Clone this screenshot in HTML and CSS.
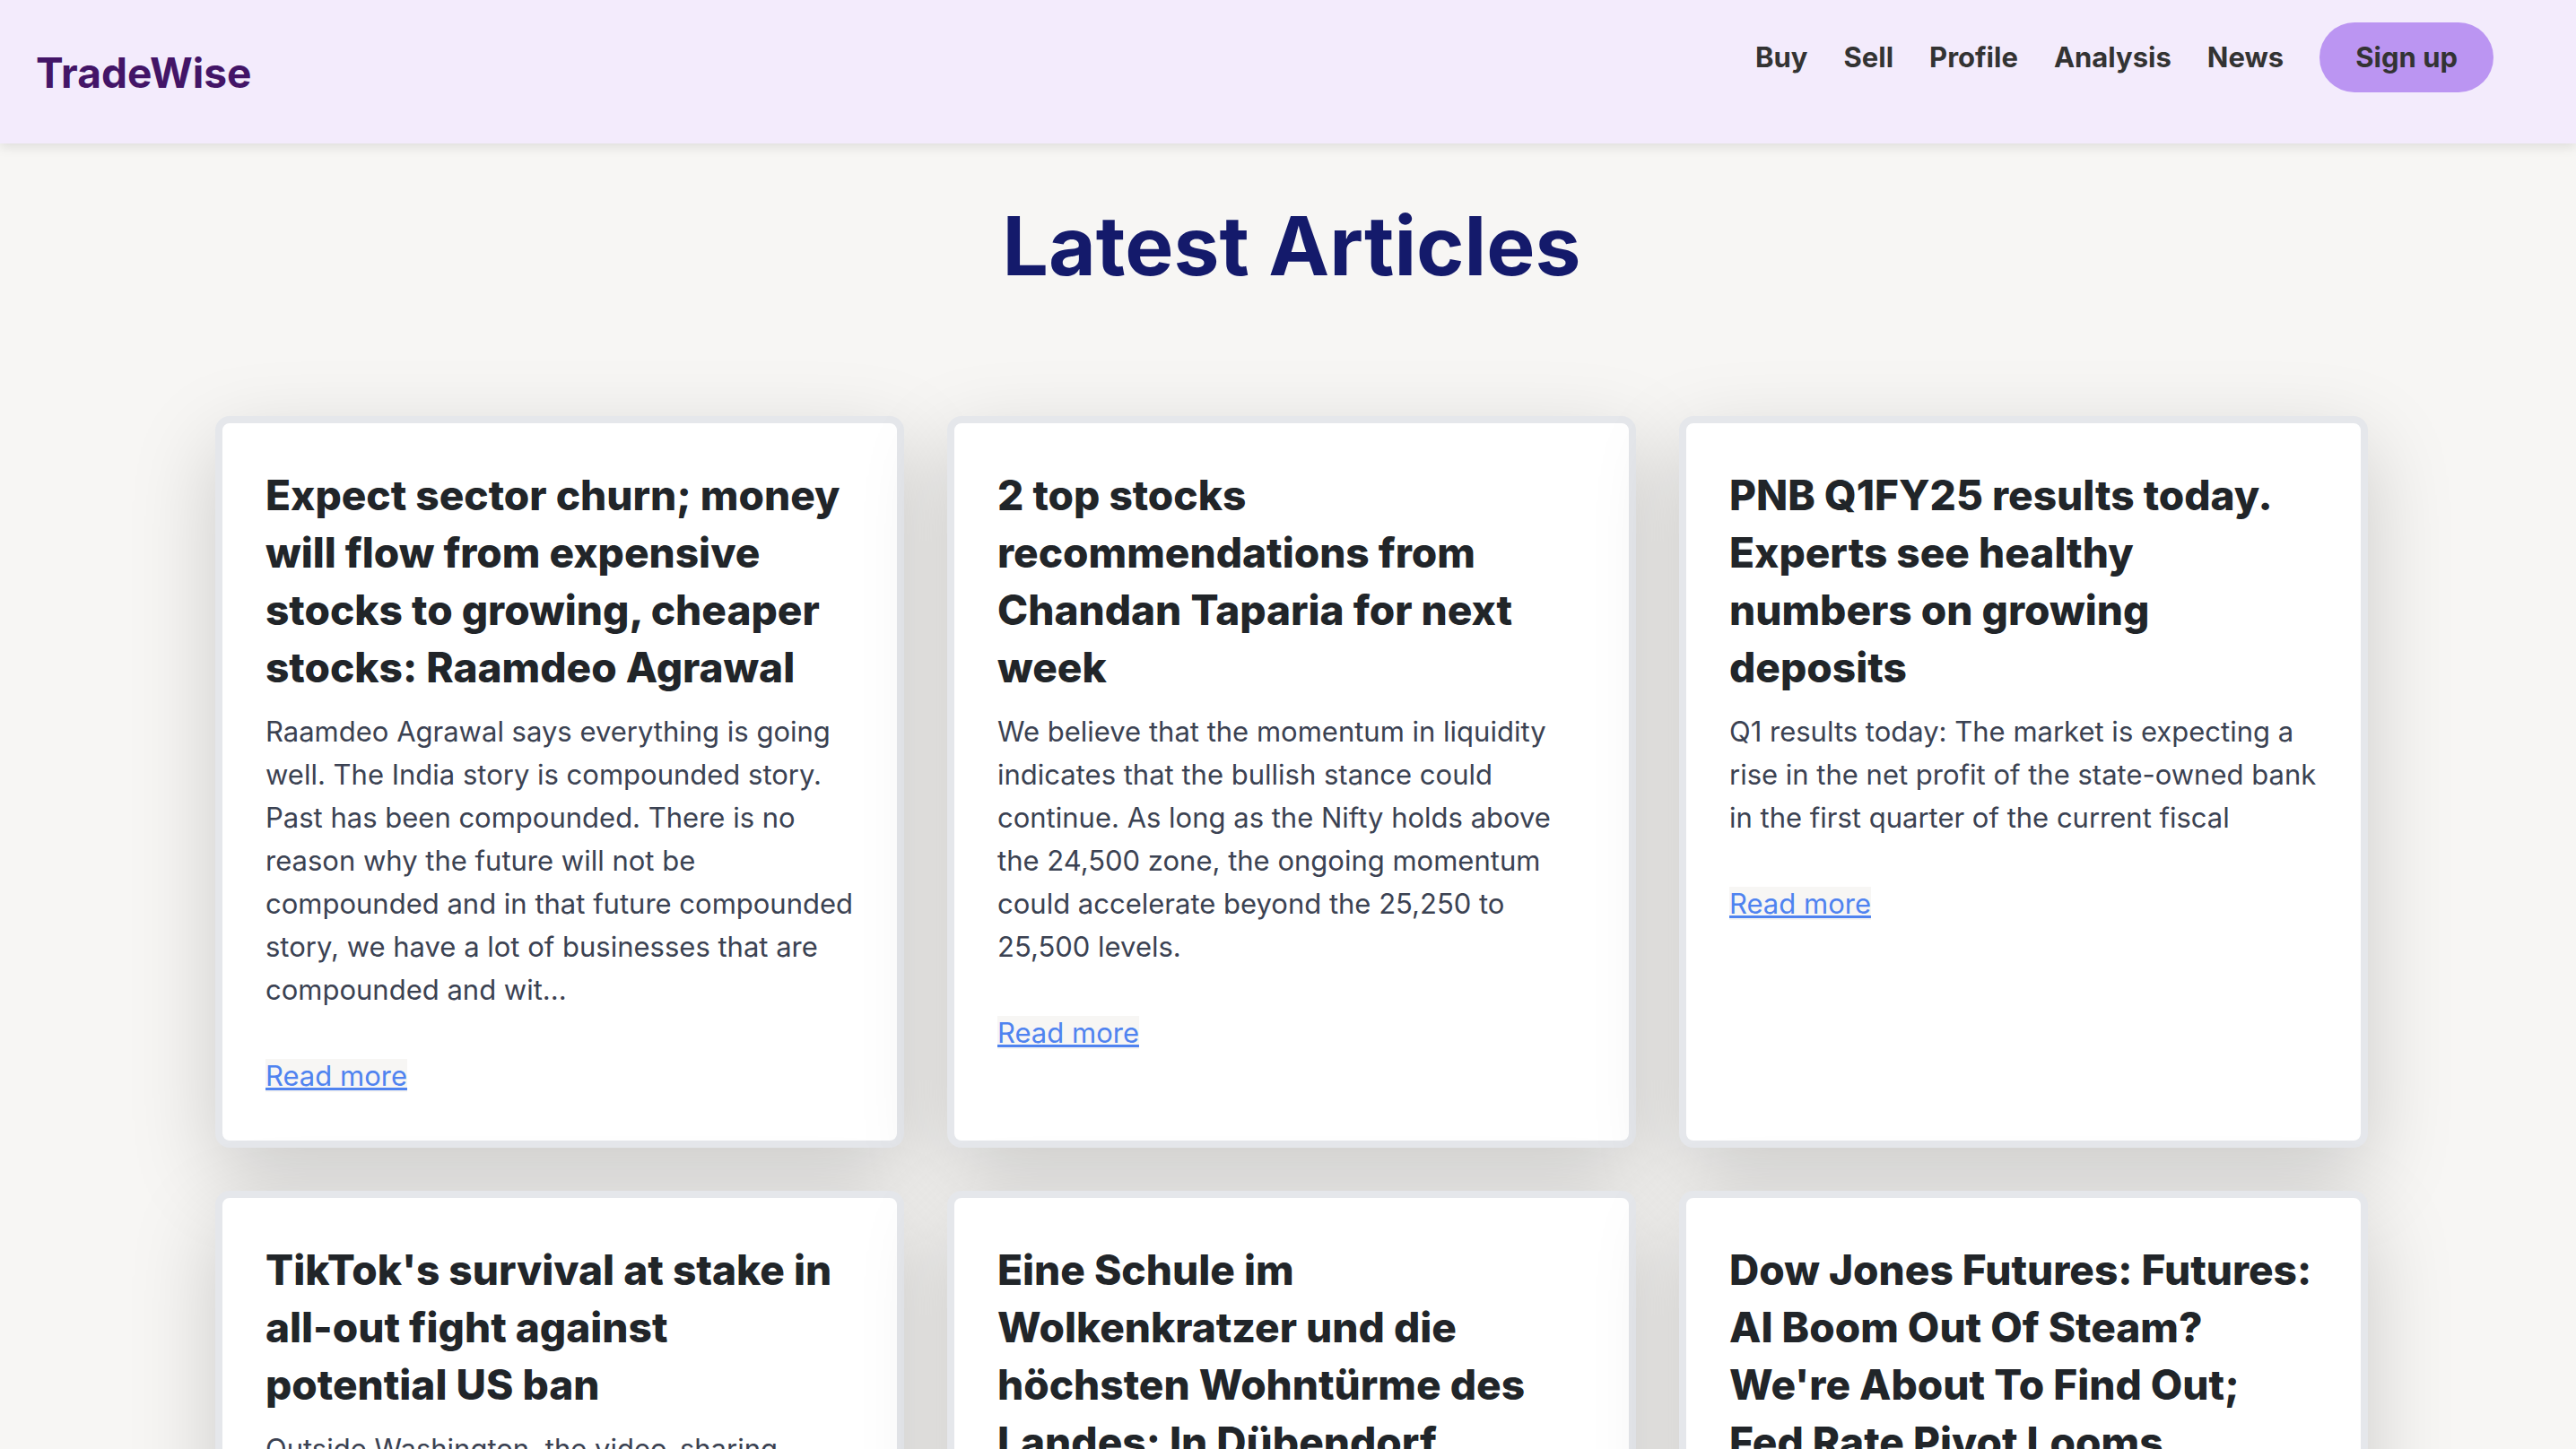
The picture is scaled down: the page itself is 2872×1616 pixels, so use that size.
FILE: index.html
```html
<!DOCTYPE html>
<html lang="en">
<head>
  <meta charset="utf-8">
  <meta name="viewport" content="width=device-width, initial-scale=1">
  <title>TradeWise</title>
  <link rel="stylesheet" href="styles.css">
</head>
<body>
  <header class="site-header">
    <a class="brand" href="#">TradeWise</a>
    <nav class="site-nav">
      <a class="nav-link" href="#">Buy</a>
      <a class="nav-link" href="#">Sell</a>
      <a class="nav-link" href="#">Profile</a>
      <a class="nav-link" href="#">Analysis</a>
      <a class="nav-link" href="#">News</a>
      <button class="signup" type="button">Sign up</button>
    </nav>
  </header>
  <main class="articles">
    <h1 class="page-title">Latest Articles</h1>
    <div class="article-grid">
      <article class="card">
        <h2 class="card-title">Expect sector churn; money will flow from expensive stocks to growing, cheaper stocks: Raamdeo Agrawal</h2>
        <p class="card-text">Raamdeo Agrawal says everything is going well. The India story is compounded story. Past has been compounded. There is no reason why the future will not be compounded and in that future compounded story, we have a lot of businesses that are compounded and wit...</p>
        <a class="read-more" href="#">Read more</a>
      </article>
      <article class="card">
        <h2 class="card-title">2 top stocks recommendations from Chandan Taparia for next week</h2>
        <p class="card-text">We believe that the momentum in liquidity indicates that the bullish stance could continue. As long as the Nifty holds above the 24,500 zone, the ongoing momentum could accelerate beyond the 25,250 to 25,500 levels.</p>
        <a class="read-more" href="#">Read more</a>
      </article>
      <article class="card">
        <h2 class="card-title">PNB Q1FY25 results today. Experts see healthy numbers on growing deposits</h2>
        <p class="card-text">Q1 results today: The market is expecting a rise in the net profit of the state-owned bank in the first quarter of the current fiscal</p>
        <a class="read-more" href="#">Read more</a>
      </article>
      <article class="card">
        <h2 class="card-title">TikTok's survival at stake in all-out fight against potential US ban</h2>
        <p class="card-text">Outside Washington, the video-sharing</p>
      </article>
      <article class="card">
        <h2 class="card-title">Eine Schule im Wolkenkratzer und die höchsten Wohntürme des Landes: In Dübendorf</h2>
      </article>
      <article class="card">
        <h2 class="card-title">Dow Jones Futures: Futures: AI Boom Out Of Steam? We're About To Find Out; Fed Rate Pivot Looms</h2>
      </article>
    </div>
  </main>
</body>
</html>
```
FILE: styles.css
```css
*,
*::before,
*::after {
  box-sizing: border-box;
}

body {
  height: 100vh;
  margin: 0;
  overflow: hidden;
  background: #f7f6f4;
  color: #212529;
  font-family: Inter, "Liberation Sans", sans-serif;
  font-size: 31px;
  line-height: 48px;
}

h1,
h2,
p {
  margin: 0;
}

.site-header {
  display: flex;
  justify-content: space-between;
  align-items: flex-start;
  min-height: 160px;
  padding: 25px 92px 24px 40px;
  background: #f3ebfc;
  box-shadow: 0 4px 12px rgba(0, 0, 0, 0.1);
}

.brand {
  align-self: center;
  color: #431567;
  font-size: 46px;
  font-weight: 700;
  text-decoration: none;
}

.site-nav {
  display: flex;
  align-items: center;
  gap: 40px;
}

.nav-link,
.signup {
  color: #333;
  font-family: inherit;
  font-size: 31px;
  font-weight: 700;
  line-height: 48px;
}

.nav-link {
  text-decoration: none;
}

.signup {
  padding: 15px 40px;
  border: 0;
  border-radius: 40px;
  background: #bb95f2;
}

.articles {
  padding: 58px 232px 64px 240px;
}

.page-title {
  margin-bottom: 134px;
  color: #141a6b;
  font-size: 91px;
  font-weight: 700;
  line-height: 112px;
  text-align: center;
}

.article-grid {
  display: grid;
  grid-template-columns: repeat(3, 1fr);
  gap: 48px;
}

.card {
  padding: 48px;
  border: 8px solid #e5e7eb;
  border-radius: 16px;
  background: #fff;
  box-shadow: 0 32px 96px rgba(0, 0, 0, 0.175);
}

.card-title {
  margin-bottom: 16px;
  font-size: 46px;
  font-weight: 800;
  line-height: 64px;
}

.card-text {
  margin-bottom: 48px;
  color: #3b4252;
}

.read-more {
  background: #f7f6f4;
  color: #4f83f0;
}
```
